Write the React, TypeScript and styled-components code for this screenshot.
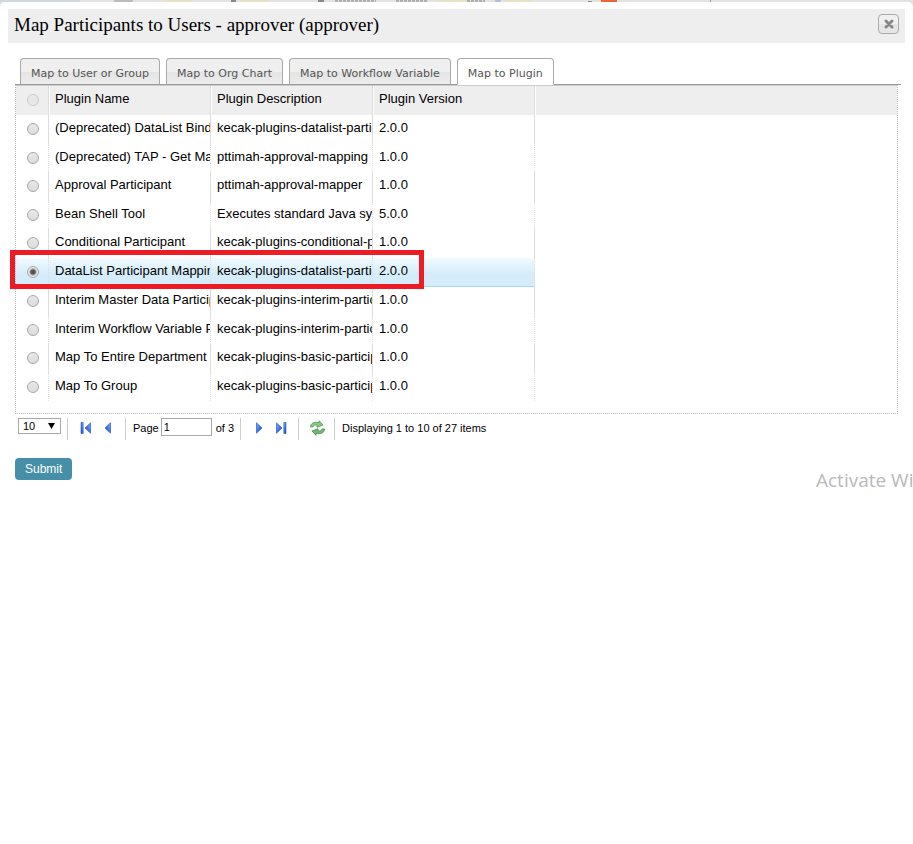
import React, { useState } from "react";
import styled, { createGlobalStyle, css } from "styled-components";

const Global = createGlobalStyle`
  * { box-sizing: border-box; }
  body {
    margin: 0;
    background: #fff;
    color: #000;
    font-family: "Liberation Sans", Arial, sans-serif;
    font-size: 13px;
    overflow-x: hidden;
  }
`;

const Page = styled.div`
  background: #e3e3e3;
`;

const Backdrop = styled.svg`
  display: block;
  height: 2px;
  width: 100%;
`;

const Dialog = styled.main`
  background: #fff;
  border-radius: 5px 5px 0 0;
  padding: 7px 8px 0;
  min-height: calc(100vh - 2px);
`;

const TitleBar = styled.header`
  display: flex;
  align-items: center;
  justify-content: space-between;
  height: 34px;
  padding: 0 6px;
  background: #eee;
`;

const Title = styled.h1`
  margin: 0;
  padding-bottom: 3px;
  font: 400 19px/24px Georgia, "Liberation Serif", serif;
`;

const CloseButton = styled.button`
  display: flex;
  align-items: center;
  justify-content: center;
  width: 21px;
  height: 20px;
  margin-bottom: 4px;
  padding: 0;
  border: 1px solid #aaa;
  border-radius: 4px;
  background: linear-gradient(#f0f0f0 50%, #e6e6e6 50%);
`;

const Tabs = styled.nav`
  display: flex;
  gap: 6px;
  margin: 15px 4px 0 7px;
  padding: 0 5px;
  border-bottom: 1px solid #999;
`;

const Tab = styled.button<{ $active?: boolean }>`
  height: 27px;
  margin-bottom: -1px;
  padding: 3px 10px 0;
  border: 1px solid #aaa;
  border-bottom-color: ${(p) => (p.$active ? "#fff" : "#999")};
  border-radius: 4px 4px 0 0;
  background: ${(p) => (p.$active ? "#fff" : "linear-gradient(#efefef 50%, #e4e4e4 52%, #ececec)")};
  color: #555;
  font: 11px "DejaVu Sans", Verdana, sans-serif;
  white-space: nowrap;
`;

const Panel = styled.section`
  margin: 0 7px;
`;

const GridFrame = styled.div`
  border: 1px dotted #bbb;
  border-top: 1px solid #ccc;
  padding-bottom: 12px;
`;

const Grid = styled.table`
  width: 100%;
  table-layout: fixed;
  border-collapse: separate;
  border-spacing: 0;
`;

const Col = styled.col<{ $w?: number }>`
  ${(p) => p.$w && css`width: ${p.$w}px;`}
`;

const HeadCell = styled.th`
  height: 29px;
  padding: 0 0 5px 5px;
  border-left: 1px solid #fff;
  border-right: 1px solid #ddd;
  background: #eee;
  font-weight: 400;
  text-align: left;
  white-space: nowrap;
  &:first-child { border-left: 0; padding: 0 0 1px 2px; }
  &:last-child { border-right: 0; }
`;

const Cell = styled.td`
  padding: 0 0 5px 6px;
  border-right: 1px solid #ddd;
  overflow: hidden;
  white-space: nowrap;
  &:last-child { border-right: 0; }
`;

const Row = styled.tr<{ $selected?: boolean }>`
  height: 29px;
  &:nth-child(even) { height: ${(p) => (p.$selected ? 29 : 28)}px; }
  &:nth-child(even) ${Cell} { border-right-style: dotted; padding-bottom: 3px; }
  & ${Cell}:first-child,
  &:nth-child(even) ${Cell}:first-child {
    position: relative;
    overflow: visible;
    padding: 0 0 1px 2px;
  }
  ${(p) =>
    p.$selected &&
    css`
      ${Cell}:not(:last-child) {
        border-bottom: 1px solid #a8d8eb;
        background: linear-gradient(#f2fafe, #d5edfb 55%, #d5edfb);
      }
    `}
`;

const Radio = styled.input`
  appearance: none;
  display: block;
  width: 12px;
  height: 12px;
  margin: 0 auto;
  border: 1px solid #a8a8a8;
  border-radius: 50%;
  background: linear-gradient(#e8e8e8, #dcdcdc);
  &:checked { background: radial-gradient(circle, #555 0 2px, #e6e6e6 4px); }
  &:disabled { border-color: #ccc; background: #e8e8e8; }
`;

const Highlight = styled.span`
  position: absolute;
  z-index: 1;
  top: -8px;
  left: -6px;
  width: 414px;
  height: 39px;
  border: 5px solid #ed1c24;
  pointer-events: none;
`;

const Pager = styled.div`
  display: flex;
  align-items: center;
  height: 30px;
  padding-left: 3px;
  font-size: 11px;
`;

const PageSize = styled.select`
  width: 43px;
  height: 16px;
  margin: 0 6px 6px 0;
  padding: 0 0 1px 4px;
  border: 1px solid #a9a9a9;
  border-radius: 0;
  background: #fff;
  color: #000;
  font: 11px "Liberation Sans", Arial, sans-serif;
  appearance: none;
`;

const SelectWrap = styled.span`
  display: flex;
  position: relative;
`;

const Caret = styled.svg`
  position: absolute;
  top: 5px;
  left: 30px;
  pointer-events: none;
`;

const Divider = styled.span`
  width: 1px;
  height: 22px;
  background: #ccc;
`;

const Group = styled.div<{ $gap?: number; $pad: string }>`
  display: flex;
  align-items: center;
  gap: ${(p) => p.$gap ?? 0}px;
  padding: ${(p) => p.$pad};
`;

const IconButton = styled.button`
  display: flex;
  padding: 0;
  border: 0;
  background: none;
`;

const PageInput = styled.input`
  width: 51px;
  height: 18px;
  margin: 0 4px 2px 2px;
  padding: 0 2px;
  border: 1px solid #a9a9a9;
  font: 11px "Liberation Sans", Arial, sans-serif;
`;

const Submit = styled.button`
  display: block;
  height: 22px;
  margin-top: 14px;
  padding: 0 10px;
  border: 0;
  border-radius: 4px;
  background: #4590a8;
  color: #fff;
  font: 12px "Liberation Sans", Arial, sans-serif;
`;

const Watermark = styled.aside`
  position: absolute;
  top: 467px;
  left: 816px;
  right: 0;
  overflow: hidden;
  color: #b9b9b9;
  font: 19px/27px "Open Sans", "Noto Sans", sans-serif;
  white-space: nowrap;
`;

const rows = [
  ["(Deprecated) DataList Binder", "kecak-plugins-datalist-participant", "2.0.0"],
  ["(Deprecated) TAP - Get Manager", "pttimah-approval-mapping", "1.0.0"],
  ["Approval Participant", "pttimah-approval-mapper", "1.0.0"],
  ["Bean Shell Tool", "Executes standard Java syntax", "5.0.0"],
  ["Conditional Participant", "kecak-plugins-conditional-participant", "1.0.0"],
  ["DataList Participant Mapping", "kecak-plugins-datalist-participant", "2.0.0"],
  ["Interim Master Data Participant", "kecak-plugins-interim-participant", "1.0.0"],
  ["Interim Workflow Variable Participant", "kecak-plugins-interim-participant", "1.0.0"],
  ["Map To Entire Department", "kecak-plugins-basic-participant", "1.0.0"],
  ["Map To Group", "kecak-plugins-basic-participant", "1.0.0"],
];

const tabs = ["Map to User or Group", "Map to Org Chart", "Map to Workflow Variable", "Map to Plugin"];

function Arrow({ back, bar }: { back?: boolean; bar?: boolean }) {
  return (
    <svg width="12" height="12" viewBox="0 0 12 12" aria-hidden="true">
      <defs>
        <linearGradient id="blue" x1="0" y1="0" x2="1" y2="1">
          <stop offset="0" stopColor="#7fb4ff" />
          <stop offset="1" stopColor="#0b3fc4" />
        </linearGradient>
      </defs>
      <g transform={back ? "translate(12 0) scale(-1 1)" : undefined}>
        <path d="M1.5 .8V11.2L7 6Z" fill="url(#blue)" stroke="#2a5cd0" strokeWidth=".7" />
        {bar && <path d="M8.8 .5h2.2v11H8.8Z" fill="url(#blue)" stroke="#2a56b8" strokeWidth=".6" />}
      </g>
    </svg>
  );
}

export default function App() {
  const [selected, setSelected] = useState(5);
  return (
    <Page>
      <Global />
      <Backdrop viewBox="0 0 913 2" preserveAspectRatio="none" aria-hidden="true">
        <path d="M0 0h80v2H0Z" fill="#cdd8da" />
        <path d="M114 0h19v2h-19Z" fill="#bbb" />
        <path d="M161 0h32l-4 2h-24ZM239 0h31l-4 2h-23ZM438 0h30v2h-30ZM505 0h27v2h-27Z" fill="#e5e3c2" />
        <path d="M231 0h5v2h-5ZM318 0h6v2h-6ZM588 1h4v1h-4Z" fill="#888" />
        <path d="M335 1h41M396 1h32M467 1h18" stroke="#777" strokeDasharray="3 1" />
        <path d="M495 1h6" stroke="#899bd0" />
        <path d="M601 0h16v2h-16Z" fill="#ee6335" />
        <path d="M710 0h1v2h-1Z" fill="#999" />
      </Backdrop>
      <Dialog>
        <TitleBar>
          <Title>Map Participants to Users - approver (approver)</Title>
          <CloseButton type="button" aria-label="Close">
            <svg width="11" height="10" viewBox="0 0 11 10" aria-hidden="true">
              <path d="M3 2l6 6M9 2L3 8" stroke="#888" strokeWidth="3" strokeLinecap="round" />
            </svg>
          </CloseButton>
        </TitleBar>
        <Tabs>
          {tabs.map((t, i) => (
            <Tab key={t} type="button" $active={i === 3}>{t}</Tab>
          ))}
        </Tabs>
        <Panel>
          <GridFrame>
            <Grid>
              <colgroup>
                <Col $w={33} />
                <Col $w={162} />
                <Col $w={162} />
                <Col $w={162} />
                <Col />
              </colgroup>
              <thead>
                <tr>
                  <HeadCell><Radio type="radio" disabled aria-label="Select" /></HeadCell>
                  <HeadCell>Plugin Name</HeadCell>
                  <HeadCell>Plugin Description</HeadCell>
                  <HeadCell>Plugin Version</HeadCell>
                  <HeadCell />
                </tr>
              </thead>
              <tbody>
                {rows.map(([name, desc, version], i) => (
                  <Row key={name} $selected={i === selected}>
                    <Cell>
                      <Radio
                        type="radio"
                        name="plugin"
                        aria-label={name}
                        checked={i === selected}
                        onChange={() => setSelected(i)}
                      />
                      {i === selected && <Highlight />}
                    </Cell>
                    <Cell>{name}</Cell>
                    <Cell>{desc}</Cell>
                    <Cell>{version}</Cell>
                    <Cell />
                  </Row>
                ))}
              </tbody>
            </Grid>
          </GridFrame>
          <Pager>
            <SelectWrap>
              <PageSize aria-label="Rows per page" defaultValue="10">
                <option>10</option>
                <option>20</option>
                <option>50</option>
              </PageSize>
              <Caret width="7" height="6" viewBox="0 0 7 6" aria-hidden="true"><path d="M0 0h7L3.5 6Z" /></Caret>
            </SelectWrap>
            <Divider />
            <Group $gap={8} $pad="0 13px 2px 12px">
              <IconButton type="button" aria-label="First page"><Arrow back bar /></IconButton>
              <IconButton type="button" aria-label="Previous page"><Arrow back /></IconButton>
            </Group>
            <Divider />
            <Group $pad="0 6px 2px 7px">
              <label htmlFor="page">Page</label>
              <PageInput id="page" defaultValue="1" />
              <span>of 3</span>
            </Group>
            <Divider />
            <Group $gap={8} $pad="0 11px 2px 14px">
              <IconButton type="button" aria-label="Next page"><Arrow /></IconButton>
              <IconButton type="button" aria-label="Last page"><Arrow bar /></IconButton>
            </Group>
            <Divider />
            <Group $pad="0 8px 2px 10px">
              <IconButton type="button" aria-label="Refresh">
                <svg width="17" height="16" viewBox="0 0 17 16" aria-hidden="true">
                  <path d="M1.500 7C1.500 3 5.500 1.500 10 2.700V.7l4 4.300-6 2.300V5.300C6 4.800 4.300 5.300 3.800 7Z" fill="#8cc78a" stroke="#4b9a4e" strokeWidth=".8" />
                  <path d="M15.500 9c0 4-4 5.500-8.500 4.300v2L3 11l6-2.300v2c2 .5 3.700 0 4.200-1.700Z" fill="#74b673" stroke="#3f8d43" strokeWidth=".8" />
                </svg>
              </IconButton>
            </Group>
            <Divider />
            <Group $pad="0 7px 2px">Displaying 1 to 10 of 27 items</Group>
          </Pager>
          <Submit type="submit">Submit</Submit>
        </Panel>
      </Dialog>
      <Watermark>Activate Windows</Watermark>
    </Page>
  );
}
